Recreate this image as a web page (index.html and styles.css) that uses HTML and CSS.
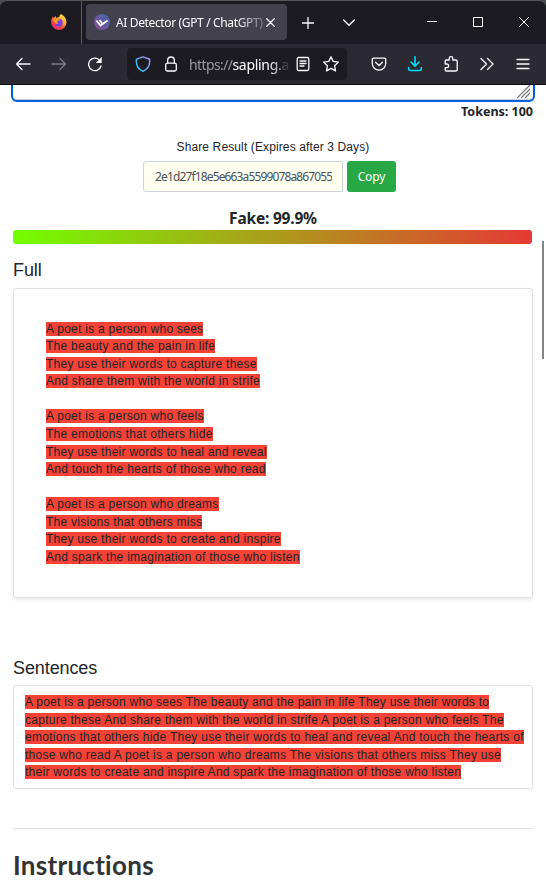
FILE: index.html
```html
<!DOCTYPE html>
<html lang="en">
<head>
<meta charset="utf-8">
<title>AI Detector (GPT / ChatGPT)</title>
<link rel="stylesheet" href="styles.css">
</head>
<body>
<header class="browser">
  <div class="tabbar">
    <div class="home-tab">
      <svg width="18" height="18" viewBox="0 0 18 18">
        <defs>
          <linearGradient id="fire" x1="1" y1="0" x2=".2" y2="1"><stop offset="0" stop-color="#fff44f"/><stop offset=".35" stop-color="#ffb62b"/><stop offset=".65" stop-color="#ff5634"/><stop offset="1" stop-color="#e71982"/></linearGradient>
        </defs>
        <path fill="url(#fire)" d="M11 1c3 1.500 5.500 4.500 5.500 8.500A7.700 7.700 0 0 1 9 17a7.700 7.700 0 0 1-7.900-7.700C1 7 1.700 5 3 3.500L3.500 5l2-2 .8 2C8 4.500 9.500 4 9.500 2.500z"/>
        <circle cx="8.800" cy="9.700" r="3.900" fill="#7542e5"/>
        <path fill="#ff9b24" d="M3 6c2-1.500 4-1 5.500 0l1.700.6C9.600 8 8.300 7.500 7.500 8.300c-.7 1-.2 2.200.8 2.700C5.800 11.500 4 9.500 3 6z"/>
      </svg>
    </div>
    <div class="tab">
      <svg class="favicon" width="16" height="16" viewBox="0 0 16 16">
        <defs><linearGradient id="logo" x1="1" y1="0" x2="0" y2="1"><stop offset="0" stop-color="#4068ae"/><stop offset="1" stop-color="#8c4b98"/></linearGradient></defs>
        <circle cx="8" cy="8" r="8" fill="url(#logo)"/>
        <path d="M2.500 6.500l4 5 7-5M5.500 6l3 3.700" fill="none" stroke="#fff" stroke-width="1.800"/>
      </svg>
      <span class="tab-title">AI Detector (GPT / ChatGPT)</span>
      <svg class="tab-close" width="9" height="9" viewBox="0 0 9 9"><path d="M.5.5l8 8M8.500.5l-8 8" class="line"/></svg>
    </div>
    <div class="slot new-tab"><svg width="12" height="12" viewBox="0 0 12 12"><path d="M6 .5v11M.5 6h11" class="line"/></svg></div>
    <div class="slot all-tabs"><svg width="12" height="8" viewBox="0 0 12 8"><path d="M.7 1L6 6.300 11.300 1" class="line"/></svg></div>
    <div class="window-controls">
      <svg width="10" height="10" viewBox="0 0 10 10"><path d="M0 4.500h10" class="thin"/></svg>
      <svg width="10" height="10" viewBox="0 0 10 10"><path d="M.5.5h9v9h-9z" class="thin"/></svg>
      <svg width="10" height="10" viewBox="0 0 10 10"><path d="M0 0l10 10M10 0L0 10" class="thin"/></svg>
    </div>
  </div>
  <div class="toolbar">
    <div class="slot"><svg width="16" height="16" viewBox="0 0 16 16"><path d="M15 8H2M7 2.500L1.500 8 7 13.500" class="line"/></svg></div>
    <div class="slot disabled"><svg width="16" height="16" viewBox="0 0 16 16"><path d="M1 8h13M9 2.500L14.500 8 9 13.500" class="line"/></svg></div>
    <div class="slot"><svg width="16" height="16" viewBox="0 0 16 16"><path d="M14 10A6.300 6.300 0 1 1 12.500 4" class="line"/><path d="M14.700 1v6H8.800z" fill="#fbfbfe"/></svg></div>
    <div class="urlbar">
      <div class="slot small"><svg width="16" height="16" viewBox="0 0 16 16">
        <defs><linearGradient id="shield" x1="1" y1="0" x2="0" y2="1"><stop offset="0" stop-color="#b491ff"/><stop offset=".5" stop-color="#63a4ef"/><stop offset="1" stop-color="#00ddff"/></linearGradient></defs>
        <path d="M8 .9l6.600 2.400v3c0 4-2.600 7-6.600 9-4-2-6.600-5-6.600-9v-3z" fill="none" stroke="url(#shield)" stroke-width="1.500" stroke-linejoin="round"/></svg></div>
      <div class="slot small"><svg width="16" height="16" viewBox="0 0 16 16"><rect x="2.700" y="7.200" width="10.600" height="7.800" rx="1.500" class="line"/><path d="M4.700 7V4.300a3.300 3.300 0 0 1 6.600 0V7" class="line"/></svg></div>
      <span class="address">https://<b>sapling.</b>ai</span>
      <div class="slot small"><svg width="16" height="16" viewBox="0 0 16 16"><rect x="2.200" y="1.500" width="11.600" height="13" rx="1.500" class="line"/><path d="M5 5h6M5 7.500h6M5 10h4" class="line"/></svg></div>
      <div class="slot small"><svg width="16" height="16" viewBox="0 0 16 16"><path d="M8 .8l2.200 4.600 5.200.7-3.800 3.600.9 5.200L8 12.400l-4.500 2.500.9-5.200L.6 6.100l5.200-.7z" class="line"/></svg></div>
    </div>
    <div class="slot"><svg width="16" height="16" viewBox="0 0 16 16"><path d="M2.500 2.200h11a1.200 1.200 0 0 1 1.200 1.200V7.500a6.700 6.700 0 0 1-13.400 0V3.400a1.200 1.200 0 0 1 1.200-1.200zM4.500 6.200L8 9.500l3.500-3.300" class="line"/></svg></div>
    <div class="slot"><svg width="16" height="16" viewBox="0 0 16 16"><path d="M8 .8v9.400M4 6l4 4.200L12 6M1.700 11.500v1.300c0 1 .7 1.700 1.500 1.700h9.600c.8 0 1.500-.7 1.500-1.700v-1.300" class="line download"/></svg></div>
    <div class="slot"><svg width="16" height="16" viewBox="0 0 16 16"><path d="M2.200 8V5.200c0-.8.500-1.200 1.200-1.200h2.800V2.500a1.800 1.800 0 0 1 3.600 0V4h2.800c.8 0 1.600.4 1.600 1.200v8.600c0 .8-.8 1.200-1.600 1.200H3.400c-.7 0-1.200-.4-1.200-1.200v-2.100h1.600a1.800 1.800 0 0 0 0-3.700z" class="line"/></svg></div>
    <div class="slot"><svg width="16" height="16" viewBox="0 0 16 16"><path d="M2 2.500L7.500 8 2 13.500M8.500 2.500L14 8l-5.500 5.500" class="line"/></svg></div>
    <div class="slot"><svg width="16" height="16" viewBox="0 0 16 16"><path d="M2 3.500h12M2 8h12M2 12.500h12" class="line"/></svg></div>
  </div>
</header>
<main class="page">
  <div class="input-end">
    <svg width="14" height="14" viewBox="0 0 14 14"><path d="M0 13L13 0M4 13l9-9M8 13l5-5" fill="none" stroke="#777" stroke-width="1.200"/></svg>
  </div>
  <div class="tokens">Tokens: 100</div>
  <div class="share-label">Share Result (Expires after 3 Days)</div>
  <div class="share">
    <div class="share-field"><span>2e1d27f18e5e663a5599078a867055</span></div>
    <button class="copy">Copy</button>
  </div>
  <div class="score">Fake: 99.9%</div>
  <div class="meter"></div>
  <h2 class="subhead">Full</h2>
  <section class="card full">
    <p><mark>A poet is a person who sees<br>The beauty and the pain in life<br>They use their words to capture these<br>And share them with the world in strife</mark></p>
    <p><mark>A poet is a person who feels<br>The emotions that others hide<br>They use their words to heal and reveal<br>And touch the hearts of those who read</mark></p>
    <p><mark>A poet is a person who dreams<br>The visions that others miss<br>They use their words to create and inspire<br>And spark the imagination of those who listen</mark></p>
  </section>
  <h2 class="subhead second">Sentences</h2>
  <section class="card sentences">
    <p><mark>A poet is a person who sees The beauty and the pain in life They use their words to<br>capture these And share them with the world in strife A poet is a person who feels The<br>emotions that others hide They use their words to heal and reveal And touch the hearts of<br>those who read A poet is a person who dreams The visions that others miss They use<br>their words to create and inspire And spark the imagination of those who listen</mark></p>
  </section>
  <hr>
  <h1>Instructions</h1>
</main>
<div class="scroll-thumb"></div>
</body>
</html>
```
FILE: styles.css
```css
* { box-sizing: border-box; }
html { overflow: hidden; }
body { margin: 0; width: 546px; height: 891px; overflow: hidden; background: #fff; color: #212529; font-family: "Liberation Sans", Arial, sans-serif; }
svg { display: block; flex: none; }
.line { fill: none; stroke: #fbfbfe; stroke-width: 1.3; stroke-linecap: round; stroke-linejoin: round; }
.thin { fill: none; stroke: #fff; stroke-width: 1; }
.download { stroke: #00ddff; stroke-width: 1.6; }

.browser { height: 85px; background: #4a4b4e; border-bottom: 1px solid #0c0c0d; }
.tabbar { height: 44px; display: flex; align-items: center; background: #1c1b22; border-top: 1px solid #55575a; border-radius: 7px 7px 0 0; }
.home-tab { width: 82px; height: 43px; padding: 0 13px 1px 0; display: flex; align-items: center; justify-content: flex-end; border-right: 1px solid #5b5a63; }
.tab { width: 201px; height: 36px; margin: 0 3px 1px 4px; padding: 0 12px 0 8px; display: flex; align-items: center; background: #42414d; border-radius: 4px; }
.tab-title { width: 149px; margin-left: 6px; overflow: hidden; white-space: nowrap; color: #fbfbfe; font: 12px/20px "Noto Sans", sans-serif; letter-spacing: -.36px; padding-top: 1px; mask-image: linear-gradient(to right, #000 120px, rgba(0,0,0,.25) 149px); }
.tab-close { margin-left: 2px; }
.slot { width: 36px; height: 36px; flex: none; display: flex; align-items: center; justify-content: center; }
.slot.small { width: 28px; }
.disabled { opacity: .38; }
.all-tabs { margin-left: 5px; }
.window-controls { margin-left: auto; display: flex; gap: 36px; padding: 0 17px 1px 0; }
.toolbar { height: 40px; padding: 0 5px; display: flex; align-items: center; background: #2b2a33; }
.urlbar { width: 220px; height: 32px; margin: 0 14px; padding: 0 2px; display: flex; align-items: center; background: #1c1b22; border-radius: 4px; }
.address { width: 100px; margin-left: 4px; padding-top: 1px; overflow: hidden; white-space: nowrap; color: #9a99a1; font: 14px/22px "Noto Sans", sans-serif; letter-spacing: -.6px; mask-image: linear-gradient(to right, #000 80px, rgba(0,0,0,.2) 100px); }
.address b { color: #fbfbfe; font-weight: 400; letter-spacing: -.3px; }

.page { padding: 0 13px; }
.input-end { height: 17px; margin: 0 -2px; display: flex; justify-content: flex-end; align-items: flex-start; border: solid #0060df; border-width: 0 2px 2px; border-radius: 0 0 6px 6px; box-shadow: inset 0 -1px #ced4da; }
.input-end svg { margin-right: 2px; }
.tokens { height: 20px; text-align: right; font: 700 12.5px/20px "Noto Sans", sans-serif; }
.share-label { margin-top: 15px; text-align: center; font-size: 12px; line-height: 20px; letter-spacing: .12px; }
.share { margin: 4px 7px 0 0; display: flex; justify-content: center; gap: 4px; }
.share-field { width: 200px; height: 31px; padding: 0 10px 0 11px; display: flex; align-items: center; background: #ffffef; border: 1px solid #ced4da; border-radius: 3px 0 0 3px; color: #495057; font: 12px/20px "Noto Sans", sans-serif; letter-spacing: -.86px; }
.share-field span { width: 178px; overflow: hidden; white-space: nowrap; }
.copy { width: 49px; height: 31px; padding: 0; border: 0; border-radius: 3px; background: #28a745; color: #fff; font: 12px/20px "Noto Sans", sans-serif; letter-spacing: -.1px; }
.score { height: 26px; margin-top: 12px; padding-top: 3px; text-align: center; font: 700 15.5px/22px "Noto Sans", sans-serif; letter-spacing: -.2px; }
.meter { height: 14px; width: 519px; background: linear-gradient(to right, #73ff00, #e53935); border-radius: 3px; }
.subhead { margin: 14px 0 0; font-size: 18px; line-height: 24px; font-weight: 400; letter-spacing: -.1px; }
.card { border: 1px solid #dedfe0; border-radius: 3px; font-size: 12px; line-height: 17.55px; letter-spacing: .27px; white-space: nowrap; }
.card p { margin: 0; }
.card mark { color: #212529; background: #f44336; }
.full { height: 310px; margin-top: 6px; padding: 31.7px 32px 0; box-shadow: 0 2px 4px rgba(0,0,0,.08); }
.full p + p { margin-top: 17.55px; }
.second { margin-top: 58px; }
.sentences { height: 104px; margin-top: 5px; padding: 8px 11px 0; }
hr { height: 1px; margin: 39px 0 0; border: 0; background: #e4e4e5; }
h1 { margin: 19px 0 0; color: #333; font: 700 26px/34px Lato, sans-serif; letter-spacing: .28px; }
.scroll-thumb { position: absolute; top: 241px; right: 0; width: 4px; height: 118px; border-left: 2px solid #858585; }
```
